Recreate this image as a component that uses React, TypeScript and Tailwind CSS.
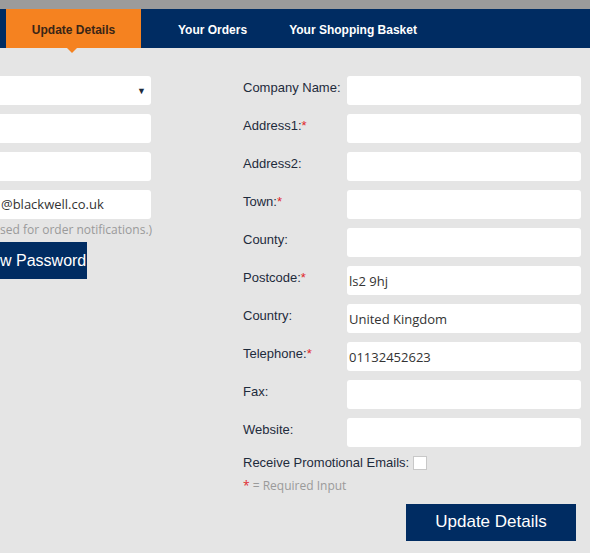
const navy = "bg-[#002c62]";

function Field({ label, required, value }: { label: string; required?: boolean; value?: string }) {
  return (
    <div className="flex items-start h-[29px]">
      <label className="w-[104px] pt-[2px] text-[13px] text-[#1e2b3c] font-['Liberation_Sans',Arial,sans-serif]">
        {label}
        {required && <span className="text-[#e0262b]">*</span>}
      </label>
      <div className="w-[234px] h-[29px] bg-white rounded-[3px] px-[2px] pt-[6px] text-[13px] text-[#333] font-['Open_Sans',sans-serif] leading-[19px]">
        {value}
      </div>
    </div>
  );
}

export default function App() {
  return (
    <div className="w-[590px] h-[553px] overflow-hidden bg-[#e5e5e5]">
      <div className="h-[9px] bg-[#9b9b9b]" />
      <nav className={`h-[39px] ${navy} flex items-stretch pl-[6px] font-['Liberation_Sans',Arial,sans-serif] text-[12px] font-bold`}>
        <div className="relative w-[135px] bg-[#f58220] flex items-center justify-center pt-[2px] text-[#3a2516]">
          Update Details
          <span className="absolute left-[61px] -bottom-[5px] w-0 h-0 border-l-[5px] border-r-[5px] border-t-[5px] border-l-transparent border-r-transparent border-t-[#f58220]" />
        </div>
        <div className="ml-[37px] pt-[2px] flex items-center text-white">Your Orders</div>
        <div className="ml-[42px] pt-[2px] flex items-center text-white">Your Shopping Basket</div>
      </nav>

      <div className="flex pt-[28px]">
        {/* left column: the page is scrolled, only its right part shows */}
        <div className="w-[151px] flex flex-col gap-[9px] shrink-0">
          <div className="h-[29px] bg-white rounded-r-[3px] flex items-center justify-end pr-[5px]">
            <span className="text-[9px] text-[#1e2b3c]">▼</span>
          </div>
          <div className="h-[29px] bg-white rounded-r-[3px]" />
          <div className="h-[29px] bg-white rounded-r-[3px]" />
          <div className="h-[29px] bg-white rounded-r-[3px] pl-[1px] pt-[5px] text-[13px] text-[#333] font-['Open_Sans',sans-serif] leading-[19px] whitespace-nowrap">
            @blackwell.co.uk
          </div>
          <p className="-mt-[7px] text-[12px] text-[#9a9a9a] font-['Open_Sans',sans-serif] whitespace-nowrap">
            sed for order notifications.)
          </p>
          <button className={`-mt-[6px] w-[87px] h-[37px] ${navy} text-white text-[16px] text-left font-['Liberation_Sans',Arial,sans-serif] whitespace-nowrap`}>
            w Password
          </button>
        </div>

        <div className="ml-[92px] flex flex-col gap-[9px]">
          <Field label="Company Name:" />
          <Field label="Address1:" required />
          <Field label="Address2:" />
          <Field label="Town:" required />
          <Field label="County:" />
          <Field label="Postcode:" required value="ls2 9hj" />
          <Field label="Country:" value="United Kingdom" />
          <Field label="Telephone:" required value="01132452623" />
          <Field label="Fax:" />
          <Field label="Website:" />
          <div className="-mt-[3px] flex items-center text-[13px] text-[#1e2b3c] font-['Liberation_Sans',Arial,sans-serif]">
            Receive Promotional Emails:
            <span className="ml-[4px] w-[14px] h-[14px] bg-white border border-[#c8c8c8]" />
          </div>
          <p className="-mt-[5px] text-[12px] text-[#9a9a9a] font-['Open_Sans',sans-serif]">
            <span className="text-[#e0262b]">*</span> = Required Input
          </p>
          <div className="flex justify-end pr-[5px]">
            <button className={`w-[170px] h-[37px] ${navy} text-white text-[17px] font-['Liberation_Sans',Arial,sans-serif]`}>
              Update Details
            </button>
          </div>
        </div>
      </div>
    </div>
  );
}
